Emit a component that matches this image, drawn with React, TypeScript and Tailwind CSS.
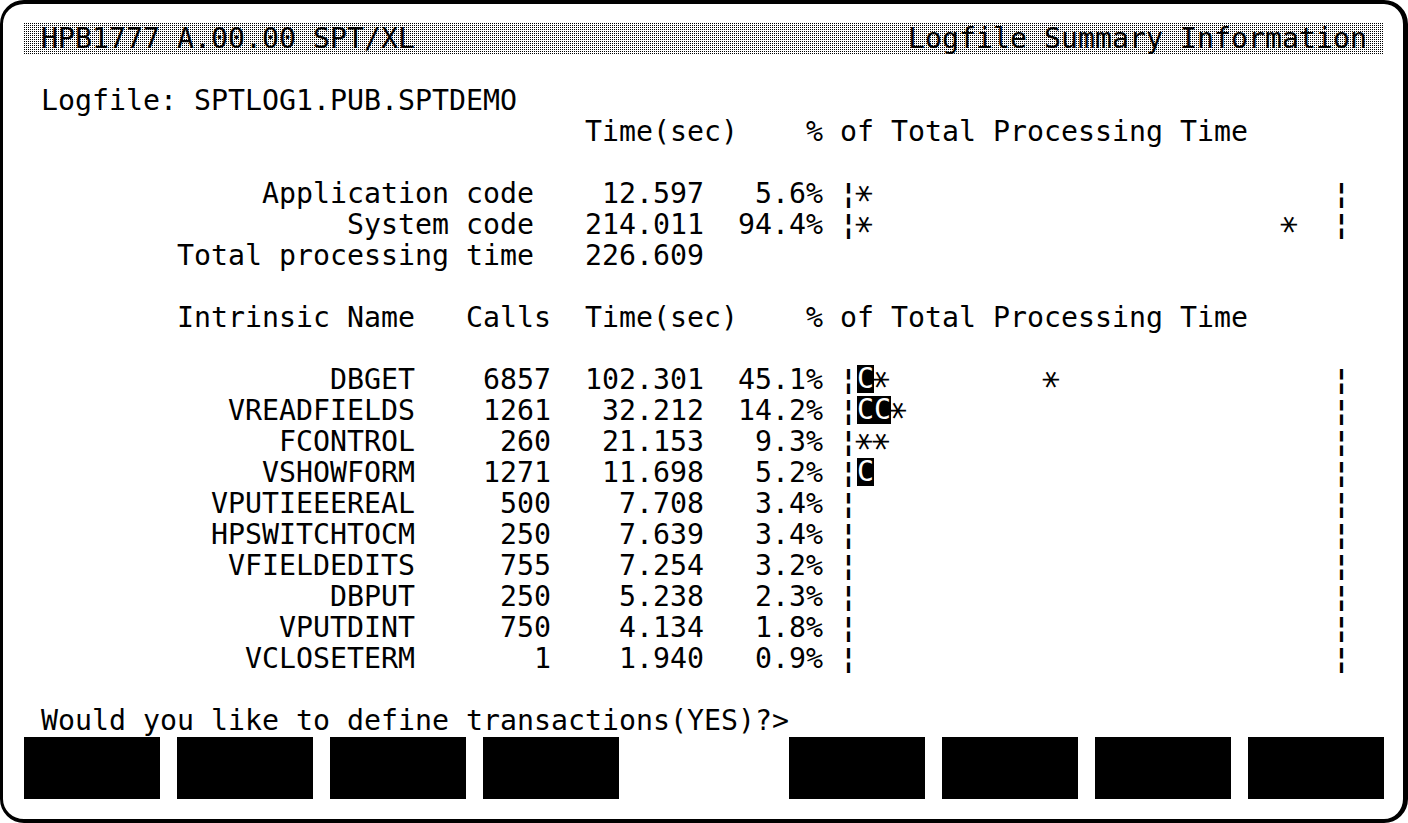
import React from "react";

const Star = () => (
  <span className="inline-block align-top mt-[7px] w-[17px] h-[17px] leading-[17px] text-center rotate-90 scale-[1.25]">
    <span className="relative top-[6px]">*</span>
  </span>
);

const Inv = ({ ch }: { ch: string }) => (
  <span className="inline-block h-[28px] leading-[28px] align-top mt-[1px] bg-black text-white">{ch}</span>
);

const BB = () => <span className="font-bold">¦</span>;

function renderCells(cells: string) {
  const out: React.ReactNode[] = [];
  let buf = "";
  let inv = "";
  const flushBuf = () => {
    if (buf) out.push(buf);
    buf = "";
  };
  const flushInv = () => {
    if (inv) out.push(<Inv key={"i" + out.length} ch={inv} />);
    inv = "";
  };
  for (const c of cells) {
    if (c === "C") {
      flushBuf();
      inv += c;
    } else if (c === "*") {
      flushBuf();
      flushInv();
      out.push(<Star key={"s" + out.length} />);
    } else {
      flushInv();
      buf += c;
    }
  }
  flushInv();
  flushBuf();
  return out;
}

const Row = ({ children }: { children?: React.ReactNode }) => (
  <div className="h-[31px] leading-[31px] whitespace-pre">{children}</div>
);

const pad = (s: string, n: number) => s.padStart(n, " ");
const sp = (n: number) => " ".repeat(n);

const data: [string, string, string, string, string][] = [
  ["DBGET", "6857", "102.301", "45.1%", "C*         *"],
  ["VREADFIELDS", "1261", "32.212", "14.2%", "CC*"],
  ["FCONTROL", "260", "21.153", "9.3%", "**"],
  ["VSHOWFORM", "1271", "11.698", "5.2%", "C"],
  ["VPUTIEEEREAL", "500", "7.708", "3.4%", ""],
  ["HPSWITCHTOCM", "250", "7.639", "3.4%", ""],
  ["VFIELDEDITS", "755", "7.254", "3.2%", ""],
  ["DBPUT", "250", "5.238", "2.3%", ""],
  ["VPUTDINT", "750", "4.134", "1.8%", ""],
  ["VCLOSETERM", "1", "1.940", "0.9%", ""],
];

export default function App() {
  return (
    <div className="w-[1408px] h-[823px] bg-white overflow-hidden">
      <div className="w-[1408px] h-[823px] border-black border-t-[4px] border-l-[3px] border-r-[5px] border-b-[4px] rounded-[24px] pt-[19px] pl-[21px] text-black font-['DejaVu_Sans_Mono','Liberation_Mono',monospace] text-[28.24px]">
        <div className="w-[1360px]">
          <div className="h-[31px] leading-[31px] whitespace-pre flex justify-between px-[17px] bg-[conic-gradient(at_1px_1px,#ffffff_75%,#000000_0)] bg-[length:2px_2px]">
            <span>HPB1777 A.00.00 SPT/XL</span>
            <span>Logfile Summary Information</span>
          </div>
          <Row />
          <Row>{" Logfile: SPTLOG1.PUB.SPTDEMO"}</Row>
          <Row>{sp(33) + "Time(sec)    % of Total Processing Time"}</Row>
          <Row />
          <Row>
            {pad("Application code", 30) + pad("12.597", 10) + pad("5.6%", 7) + " "}
            <BB />
            {renderCells("*".padEnd(28, " "))}
            <BB />
          </Row>
          <Row>
            {pad("System code", 30) + pad("214.011", 10) + pad("94.4%", 7) + " "}
            <BB />
            {renderCells(("*" + sp(24) + "*").padEnd(28, " "))}
            <BB />
          </Row>
          <Row>{pad("Total processing time", 30) + pad("226.609", 10)}</Row>
          <Row />
          <Row>{sp(9) + "Intrinsic Name   Calls  Time(sec)    % of Total Processing Time"}</Row>
          <Row />
          {data.map(([name, calls, time, pct, cells]) => (
            <Row key={name}>
              {pad(name, 23) + pad(calls, 8) + pad(time, 9) + pad(pct, 7) + " "}
              <BB />
              {renderCells(cells.padEnd(28, " "))}
              <BB />
            </Row>
          ))}
          <Row />
          <Row>{" Would you like to define transactions(YES)?>"}</Row>
          <div className="flex gap-[17px] h-[62px] pt-[1px]">
            <div className="w-[136px] h-[62px] bg-black" />
            <div className="w-[136px] h-[62px] bg-black" />
            <div className="w-[136px] h-[62px] bg-black" />
            <div className="w-[136px] h-[62px] bg-black" />
            <div className="w-[136px] h-[62px]" />
            <div className="w-[136px] h-[62px] bg-black" />
            <div className="w-[136px] h-[62px] bg-black" />
            <div className="w-[136px] h-[62px] bg-black" />
            <div className="w-[136px] h-[62px] bg-black" />
          </div>
        </div>
      </div>
    </div>
  );
}
